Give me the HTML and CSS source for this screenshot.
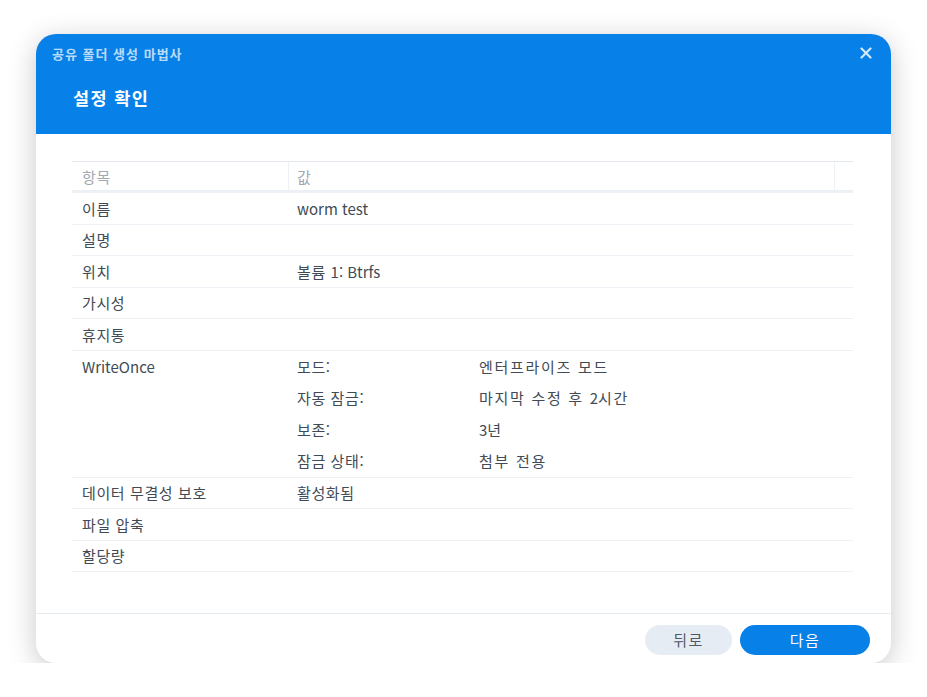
FILE: index.html
```html
<!DOCTYPE html>
<html lang="ko">
<head>
<meta charset="utf-8">
<link rel="stylesheet" href="styles.css">
</head>
<body>
<div class="dialog">
  <div class="header">
    <div class="topbar">
      <span class="wizard">공유 폴더 생성 마법사</span>
      <svg class="close" width="12" height="12" viewBox="0 0 12 12"><path d="M1.5 1.5 L10.5 10.5 M10.5 1.5 L1.5 10.5" stroke="currentColor" stroke-width="2.2" stroke-linecap="round"/></svg>
    </div>
    <div class="title">설정 확인</div>
  </div>
  <div class="content">
    <div class="table">
      <div class="row head">
        <div class="c1">항목</div>
        <div class="c2">값</div>
        <div class="c3"></div>
      </div>
      <div class="row"><div class="c1">이름</div><div class="c2"><span class="lat">worm test</span></div></div>
      <div class="row"><div class="c1">설명</div><div class="c2"></div></div>
      <div class="row"><div class="c1">위치</div><div class="c2">볼륨 <span class="lat">1: Btrfs</span></div></div>
      <div class="row"><div class="c1">가시성</div><div class="c2"></div></div>
      <div class="row"><div class="c1">휴지통</div><div class="c2"></div></div>
      <div class="row multi">
        <div class="c1"><span class="lat">WriteOnce</span></div>
        <div class="c2 sub">
          <div class="kv"><span class="k">모드:</span><span class="v">엔터프라이즈 모드</span></div>
          <div class="kv"><span class="k">자동 잠금:</span><span class="v">마지막 수정 후 <span class="lat">2</span>시간</span></div>
          <div class="kv"><span class="k">보존:</span><span class="v"><span class="lat">3</span>년</span></div>
          <div class="kv"><span class="k">잠금 상태:</span><span class="v">첨부 전용</span></div>
        </div>
      </div>
      <div class="row"><div class="c1">데이터 무결성 보호</div><div class="c2">활성화됨</div></div>
      <div class="row"><div class="c1">파일 압축</div><div class="c2"></div></div>
      <div class="row"><div class="c1">할당량</div><div class="c2"></div></div>
    </div>
  </div>
  <div class="footer">
    <button class="btn back">뒤로</button>
    <button class="btn next">다음</button>
  </div>
</div>
</body>
</html>
```

FILE: styles.css
```css
* { box-sizing: border-box; }
html, body { margin: 0; padding: 0; background: #ffffff; }
body {
  font-family: "Noto Sans CJK KR", "Noto Sans", sans-serif;
  font-size: 15px;
  color: #414b55;
  padding: 34px 0 0 36px;
}
.dialog {
  width: 855px;
  height: 629px;
  background: #fff;
  border-radius: 20px;
  overflow: hidden;
  display: flex;
  flex-direction: column;
  box-shadow: 0 6px 28px rgba(0,0,0,0.22);
}
.header {
  background: #0780e8;
  height: 100px;
  color: #fff;
  flex: none;
}
.topbar {
  display: flex;
  align-items: center;
  justify-content: space-between;
  height: 38px;
  padding: 0 19px 0 16px;
}
.wizard {
  font-size: 13px;
  letter-spacing: 1px;
  font-weight: 700;
  color: rgba(255,255,255,0.72);
}
.close { color: rgba(255,255,255,0.82); }
.title {
  padding: 13px 0 0 37px;
  font-size: 17.5px;
  letter-spacing: 1.4px;
  font-weight: 700;
  line-height: 26px;
}
.content {
  flex: 1;
  padding: 27px 38px 0 36px;
  border-bottom: 1px solid #e6ecf3;
}
.table { border-top: 1.5px solid #e3e8ee; letter-spacing: 0.6px; }
.v { letter-spacing: 1.7px; }
.lat { letter-spacing: 0; }
.row {
  display: flex;
  border-bottom: 1.5px solid #edf1f5;
  height: 31.5px;
  align-items: center;
}
.row.head { color: #a0a8b2; border-bottom: 3px solid #edf1f5; height: 31px; align-items: stretch; }
.row.head .c1, .row.head .c2 { display: flex; align-items: center; }
.row.head .c1 { border-right: 1.5px solid #edf1f5; }
.row.head .c2 { border-right: 1.5px solid #edf1f5; }
.c1 { width: 217px; padding-left: 10px; flex: none; }
.c2 { flex: 1; padding-left: 8px; }
.row.head .c2 { flex: none; width: 546px; }
.c3 { flex: 1; }
.row.multi { align-items: flex-start; height: 127px; }
.row.multi .c1 { line-height: 31.5px; }
.kv { display: flex; height: 31.5px; align-items: center; }
.k { width: 182px; flex: none; }
.footer {
  flex: none;
  height: 49px;
  display: flex;
  justify-content: flex-end;
  align-items: center;
  gap: 8px;
  padding: 2px 21px 0 0;
}
.btn {
  font-family: "Noto Sans CJK KR", sans-serif;
  font-size: 15px;
  letter-spacing: 1.5px;
  height: 30px;
  border: none;
  border-radius: 15px;
}
.back { width: 87px; background: #e6ecf3; color: #505a64; }
.next { width: 130px; background: #0780e8; color: #fff; }
```
